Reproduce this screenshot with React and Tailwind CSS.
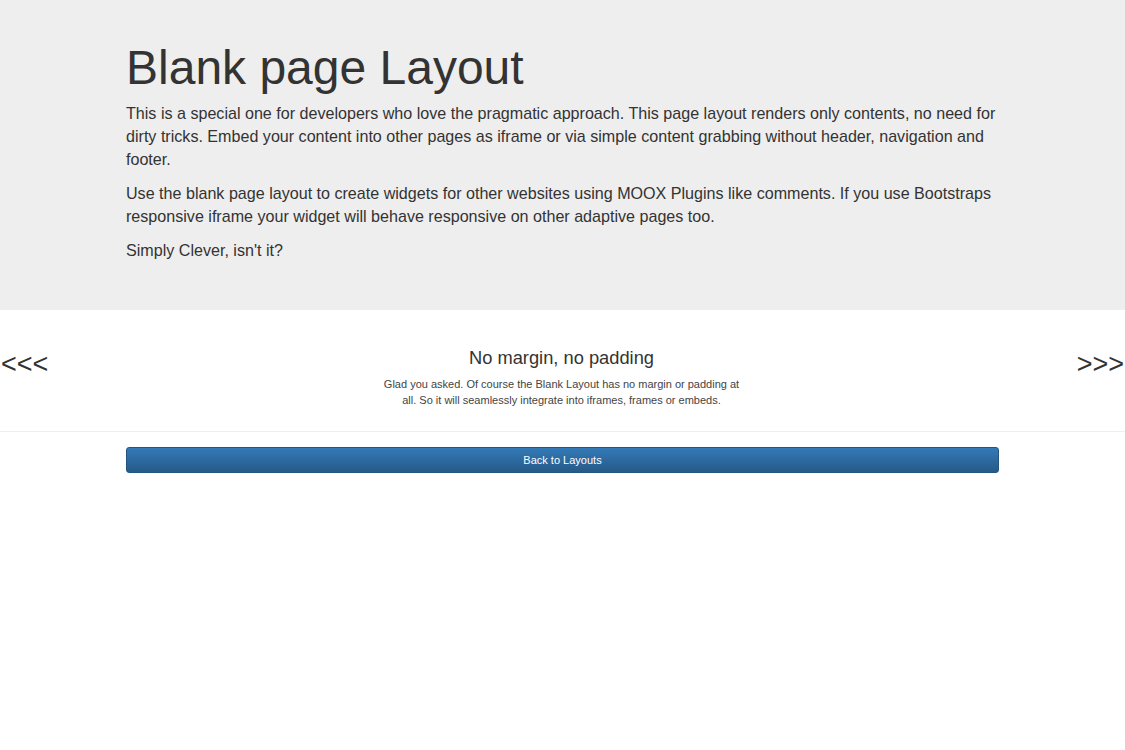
export default function App() {
  return (
    <div className="min-h-[750px] bg-white text-[#333] font-['Liberation_Sans',Arial,sans-serif]">
      <div className="bg-[#eee] pt-[41px] pb-[37px]">
        <div className="mx-[126px]">
          <h1 className="m-0 mb-[8px] text-[48px] leading-[53px] font-normal">Blank page Layout</h1>
          <p className="mb-[11px] text-[16.1px] leading-[23px]">
            This is a special one for developers who love the pragmatic approach. This page layout renders only contents, no need for dirty tricks. Embed your content into other pages as iframe or via simple content grabbing without header, navigation and footer.
          </p>
          <p className="mb-[11px] text-[16.1px] leading-[23px]">
            Use the blank page layout to create widgets for other websites using MOOX Plugins like comments. If you use Bootstraps responsive iframe your widget will behave responsive on other adaptive pages too.
          </p>
          <p className="mb-[11px] text-[16.1px] leading-[23px]">Simply Clever, isn't it?</p>
        </div>
      </div>

      <div className="flex items-start justify-between pt-[36px] pb-[23px] border-b border-[#eee]">
        <span className="mt-[3px] text-[27px] leading-[30px] pl-[1px]">&lt;&lt;&lt;</span>
        <div className="text-center mr-[2px]">
          <h3 className="text-[18.3px] leading-[24px] font-normal mb-[6px]">No margin, no padding</h3>
          <p className="text-[11px] leading-[16px] text-[#444]">
            Glad you asked. Of course the Blank Layout has no margin or padding at
            <br />
            all. So it will seamlessly integrate into iframes, frames or embeds.
          </p>
        </div>
        <span className="mt-[3px] text-[27px] leading-[30px] pr-[1px]">&gt;&gt;&gt;</span>
      </div>

      <div className="mx-[126px] mt-[15px]">
        <button className="w-full h-[26px] rounded-[3px] border border-[#245580] bg-gradient-to-b from-[#337ab7] to-[#265a88] text-white text-[11px] leading-[24px]">
          Back to Layouts
        </button>
      </div>
    </div>
  );
}
